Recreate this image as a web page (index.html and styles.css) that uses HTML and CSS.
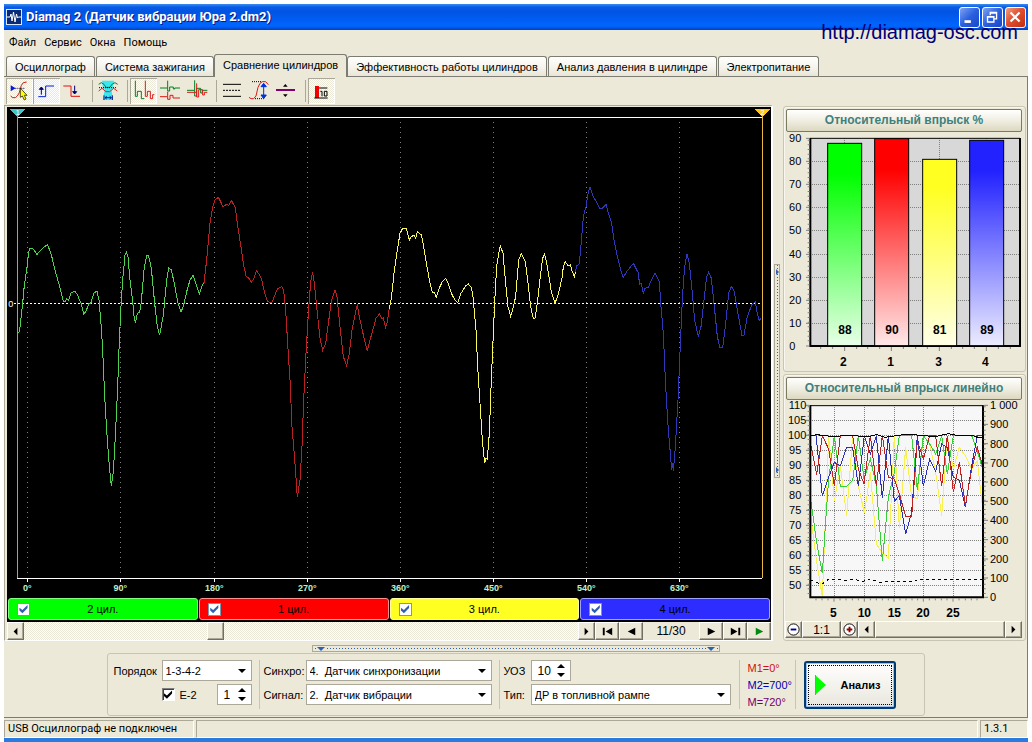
FILE: index.html
```html
<!DOCTYPE html>
<html lang="ru">
<head>
<meta charset="utf-8">
<title>Diamag 2</title>
<link rel="stylesheet" href="styles.css">
</head>
<body>
<div class="window">
  <header class="titlebar">
    <svg class="app-icon" viewBox="0 0 16 16" aria-hidden="true"><rect width="16" height="16" fill="#d8e8ff"/><rect x="1" y="1" width="14" height="14" fill="#0a2a78"/><path d="M1 8H4L5 5L6 12L7.500 3L9 13L10.500 5L11.500 9L12.500 8H15" fill="none" stroke="#fff"/></svg>
    <h1 class="title">Diamag 2 (Датчик вибрации Юра 2.dm2)</h1>
    <button class="win-btn" aria-label="Свернуть"><svg viewBox="0 0 21 21"><path d="M5 15H12" stroke="#fff" stroke-width="3"/></svg></button>
    <button class="win-btn" aria-label="Восстановить"><svg viewBox="0 0 21 21"><path d="M8 8V5H15V12H12M5 9.500H12V15.500H5ZM5 10H12M8 5.500H15" fill="none" stroke="#fff" stroke-width="1.500"/></svg></button>
    <button class="win-btn win-close" aria-label="Закрыть"><svg viewBox="0 0 21 21"><path d="M5 5L15 15M15 5L5 15" stroke="#fff" stroke-width="2.400"/></svg></button>
    <a class="site" href="http://diamag-osc.com">http://diamag-osc.com</a>
  </header>
  <nav class="menubar"><button>Файл</button><button>Сервис</button><button>Окна</button><button>Помощь</button></nav>
  <div class="tabs" role="tablist">
    <button role="tab">Осциллограф</button><button role="tab">Система зажигания</button><button role="tab" class="active" aria-selected="true">Сравнение цилиндров</button><button role="tab">Эффективность работы цилиндров</button><button role="tab">Анализ давления в цилиндре</button><button role="tab">Электропитание</button>
  </div>
  <main class="page">
    <div class="toolbar">
      <button class="tool pressed" aria-label="Курсор"><svg viewBox="18 234 81 78"><path d="M32 256L47 265L32 274Z" fill="#0018e0"/><path d="M46 265H76" stroke="#000090" stroke-width="3" stroke-dasharray="3 3"/><path d="M32 288L38 293H46L52 288L58 278L64 256L70 248L80 246" fill="none" stroke="#e01010" stroke-width="3"/><path d="M61 264V292L67 288L73 300L78 297L73 286H81Z" fill="#ff0" stroke="#000" stroke-width="2"/></svg></button>
      <button class="tool pressed" aria-label="Фронт"><svg viewBox="99 234 81 78"><path d="M115 290H137V258H162" fill="none" stroke="#0020d8" stroke-width="3"/><path d="M124 284V264M118 268L124 261L130 268Z" fill="#000070" stroke="#000070" stroke-width="3"/></svg></button>
      <button class="tool" aria-label="Спад"><svg viewBox="180 234 81 78"><path d="M190 258H213V289H240" fill="none" stroke="#e01010" stroke-width="3"/><path d="M224 257V278M218 275L224 282L230 275Z" fill="#000070" stroke="#000070" stroke-width="3"/></svg></button>
      <span class="sep"></span>
      <button class="tool" aria-label="Интервал"><svg viewBox="282 234 81 78"><path d="M303 242H339L336 266H331L336 300H306L311 266H306Z" fill="#38e8f0"/><path d="M293 253L301 248L309 253L315 262H326L334 252L342 248L350 253" fill="none" stroke="#008040" stroke-width="3"/><path d="M293 273L303 265L315 275H326L338 265L349 273" fill="none" stroke="#d02828" stroke-width="3"/><path d="M294 263H348" stroke="#000" stroke-width="3" stroke-dasharray="3 3"/><path d="M309 286V300M334 286V300M312 293H331M317 289L312 293L317 297M326 289L331 293L326 297" fill="none" stroke="#001090" stroke-width="3"/></svg></button>
      <span class="sep"></span>
      <button class="tool pressed" aria-label="Последовательно"><svg viewBox="387 234 81 78"><path d="M403 242V289H409V274H421V296H430" fill="none" stroke="#008020" stroke-width="3"/><path d="M433 242V289H439V274H448V296H455V284H460" fill="none" stroke="#e01818" stroke-width="3"/></svg></button>
      <button class="tool" aria-label="Раздельно"><svg viewBox="468 234 81 78"><path d="M477 264H500V242M500 264V273H506V261H517V267H521V264H537" fill="none" stroke="#008020" stroke-width="3"/><path d="M477 290H500V275M500 290V298H507V286H516V294H537" fill="none" stroke="#e01818" stroke-width="3"/></svg></button>
      <button class="tool" aria-label="Наложение"><svg viewBox="549 234 81 78"><path d="M558 271H581V241M581 271V288H587V265H599V279H604V271H619" fill="none" stroke="#008020" stroke-width="3"/><path d="M558 277H587V250M587 277V291H593V269H605V285H610V277H619" fill="none" stroke="#e01818" stroke-width="3"/></svg></button>
      <span class="sep"></span>
      <button class="tool" aria-label="Уровни"><svg viewBox="654 234 81 78"><path d="M666 253H720M666 289H720" stroke="#000" stroke-width="3"/><path d="M666 271H720" stroke="#000" stroke-width="3" stroke-dasharray="6 3"/></svg></button>
      <button class="tool" aria-label="Амплитуда"><svg viewBox="735 234 81 78"><path d="M753 245H780M762 296H792" stroke="#000" stroke-width="3" stroke-dasharray="3 3"/><path d="M744 292L750 296H758L765 288L771 262L777 250L784 245H794L802 254" fill="none" stroke="#e01818" stroke-width="3"/><path d="M788 254V289M780 260L788 250L796 260ZM780 285L788 296L796 285Z" fill="#0030e0" stroke="#0030e0" stroke-width="3"/></svg></button>
      <button class="tool" aria-label="Смещение"><svg viewBox="816 234 81 78"><path d="M825 270H882" stroke="#800070" stroke-width="6"/><path d="M846 260L853 252L860 260ZM846 283L853 291L860 283Z"/></svg></button>
      <span class="sep"></span>
      <button class="tool pressed" aria-label="Гистограмма"><svg viewBox="921 234 81 78"><path d="M942 258H954V294H942Z" fill="#f00000"/><path d="M954 264H979M940 294H980" stroke="#000" stroke-width="3"/><path d="M958 274H963V289M970 274H978V288H970Z" fill="none" stroke="#000" stroke-width="3"/></svg></button>
    </div>
    <div class="workspace">
      <section class="scope">
        <svg class="wave" viewBox="21 321 2292 1470" role="img" aria-label="Сигнал по цилиндрам">
          <g class="dots"><path d="M82 365V1731M361 365V1731M643 365V1731M922 365V1731M1201 365V1731M1480 365V1731M1759 365V1731M2038 365V1731"/></g>
          <path class="tick" d="M82 1737V1746M361 1737V1746M643 1737V1746M922 1737V1746M1201 1737V1746M1480 1737V1746M1759 1737V1746M2038 1737V1746"/>
          <path class="frame" d="M52 352H2286M52 1735H2286"/>
          <path class="zero" d="M42 910H2286"/>
          <path d="M52 330V1735" class="trace cyan"/><path d="M2287 330V1735" class="trace gold"/>
          <path d="M30 328H76L53 351Z" fill="#40c8c8"/><path d="M2263 328H2310L2287 351Z" fill="#ffc818"/>
          <text class="pin" x="53" y="346">1</text><text class="pin" x="2287" y="346">2</text>
          <g transform="translate(0 360)">
            <polyline class="trace green" points="56,640 60,620 68,550 73,495 80,450 86,395 90,385 98,385 111,403 121,392 131,382 143,374 155,408 167,458 177,492 190,543 197,543 200,536 206,541 213,519 225,514 231,522 243,550 251,582 257,576 266,552 273,548 282,518 291,514 297,540 304,625 308,690 314,830 320,930 328,1040 334,1098 340,1055 347,930 353,800 358,660 363,560 368,480 375,405 379,397 384,412 390,480 398,545 403,597 407,606 412,580 419,577 424,545 432,450 440,406 446,408 454,445 464,550 472,620 479,646 490,585 500,480 506,443 514,450 523,490 533,545 543,577 551,555 560,515 570,480 579,466 587,488 598,522 605,500 612,488"/>
            <polyline class="trace red" points="612,488 620,420 630,310 638,262 645,240 655,232 662,245 668,260 680,253 686,256 694,241 700,252 706,262 712,310 722,375 730,430 738,468 746,474 754,487 762,475 769,452 778,464 785,478 793,515 803,545 815,548 823,530 832,507 845,500 851,512 857,570 863,670 870,780 876,920 884,1015 892,1132 900,1080 906,980 911,840 918,700 925,580 932,485 938,457 943,490 950,560 960,655 968,690 977,670 985,610 994,545 1005,509 1011,530 1020,620 1030,710 1040,737 1048,700 1056,630 1066,580 1072,553 1078,590 1090,645 1102,693 1110,660 1118,632 1128,595 1138,582 1146,597 1150,594 1157,622 1162,605 1168,563"/>
          </g>
          <g transform="translate(1140 360)">
            <polyline class="trace yellow" points="28,567 34,535 42,460 52,390 60,340 67,327 79,325 84,345 88,360 93,350 102,346 107,355 112,335 124,345 130,375 140,435 150,490 157,516 163,518 169,532 177,506 187,485 197,476 205,490 214,520 225,540 233,548 243,520 257,497 265,492 274,502 279,530 288,630 293,740 300,850 307,960 314,1030 318,1015 322,1018 328,940 334,780 340,640 345,530 350,440 356,400 361,377 369,400 376,480 384,560 392,589 399,565 407,530 416,420 424,400 436,425 444,490 452,560 460,596 465,594 472,550 482,460 488,415 494,402 502,440 514,515 525,550 534,525 546,475 550,440 556,425 564,437 571,435 577,455 584,471 586,455"/>
            <polyline class="trace blue" points="586,455 590,438 598,432 603,375 610,290 618,260 625,215 630,202 640,230 652,250 660,266 668,264 678,253 685,280 694,305 702,360 712,410 722,450 730,472 740,455 760,430 774,457 779,492 784,490 790,522 794,505 805,502 813,482 825,460 838,485 843,560 850,640 857,800 865,930 871,1000 875,1050 878,1030 880,1052 886,980 894,840 902,650 908,520 914,440 921,402 928,430 936,510 944,600 955,650 963,620 972,540 980,470 986,457 994,475 1003,560 1012,650 1020,683 1028,682 1036,620 1046,520 1054,499 1063,515 1073,575 1086,648 1092,645 1102,590 1115,555 1126,546 1132,580 1138,602 1142,595"/>
          </g>
          <g class="angles"><text x="82" y="1773">0°</text><text x="361" y="1773">90°</text><text x="643" y="1773">180°</text><text x="922" y="1773">270°</text><text x="1201" y="1773">360°</text><text x="1480" y="1773">450°</text><text x="1759" y="1773">540°</text><text x="2038" y="1773">630°</text><text x="32" y="920" class="origin">0</text></g>
        </svg>
        <div class="cylinders">
          <label class="cyl c-green"><input type="checkbox" class="xp-check" checked><span>2 цил.</span></label>
          <label class="cyl c-red"><input type="checkbox" class="xp-check" checked><span>1 цил.</span></label>
          <label class="cyl c-yellow"><input type="checkbox" class="xp-check" checked><span>3 цил.</span></label>
          <label class="cyl c-blue"><input type="checkbox" class="xp-check" checked><span>4 цил.</span></label>
        </div>
        <div class="player">
          <button class="raised" aria-label="Влево"><svg viewBox="0 0 16 16"><path d="M10 4V12L6 8Z"/></svg></button>
          <div class="track"><span class="thumb"></span></div>
          <button class="raised" aria-label="Вправо"><svg viewBox="0 0 16 16"><path d="M6 4V12L10 8Z"/></svg></button>
          <button class="raised wide" aria-label="В начало"><svg viewBox="0 0 16 16"><path d="M3 4H5V12H3ZM13 4V12L6 8Z"/></svg></button>
          <button class="raised wide" aria-label="Назад"><svg viewBox="0 0 16 16"><path d="M12 4V12L4 8Z"/></svg></button>
          <output class="counter">11/30</output>
          <button class="raised wide" aria-label="Вперёд"><svg viewBox="0 0 16 16"><path d="M4 4V12L12 8Z"/></svg></button>
          <button class="raised wide" aria-label="В конец"><svg viewBox="0 0 16 16"><path d="M3 4V12L10 8ZM11 4H13V12H11Z"/></svg></button>
          <button class="raised wide" aria-label="Воспроизвести"><svg viewBox="0 0 16 16"><path d="M4 4V12L12 8Z" fill="#008a10"/></svg></button>
        </div>
      </section>
      <div class="v-split"><i></i><i></i></div>
      <aside class="charts">
        <section class="group">
          <h2>Относительный впрыск %</h2>
          <svg class="chart" viewBox="12 96 723 717" role="img" aria-label="Относительный впрыск">
            <defs>
              <linearGradient id="g" x2="0" y2="1"><stop stop-color="#0f0"/><stop offset=".15" stop-color="#0f0"/><stop offset="1" stop-color="#e8ffe8"/></linearGradient>
              <linearGradient id="r" x2="0" y2="1"><stop stop-color="#f00"/><stop offset=".15" stop-color="#f00"/><stop offset="1" stop-color="#ffe8e8"/></linearGradient>
              <linearGradient id="y" x2="0" y2="1"><stop stop-color="#ff2"/><stop offset=".15" stop-color="#ff2"/><stop offset="1" stop-color="#ffffe8"/></linearGradient>
              <linearGradient id="b" x2="0" y2="1"><stop stop-color="#22f"/><stop offset=".15" stop-color="#22f"/><stop offset="1" stop-color="#ececff"/></linearGradient>
            </defs>
            <rect x="90" y="115" width="630" height="623" fill="#d8d8d8"/>
            <path class="grid" d="M90 184H720M90 253H720M90 322H720M90 391H720M90 463H720M90 532H720M90 601H720M90 670H720M194 115V738M334 115V738M478 115V738M619 115V738"/>
            <path d="M90 115H720" stroke="#000" stroke-width="3"/><path d="M91 114V738M88 738H723M720 114V741" fill="none" stroke="#000" stroke-width="6"/>
            <g stroke="#000" stroke-width="3"><rect x="143" y="130" width="102" height="607" fill="url(#g)"/><rect x="284" y="116" width="102" height="621" fill="url(#r)"/><rect x="428" y="178" width="102" height="559" fill="url(#y)"/><rect x="569" y="121" width="102" height="616" fill="url(#b)"/></g>
            <path class="scale" d="M78 115H88M78 184H88M78 253H88M78 322H88M78 391H88M78 463H88M78 532H88M78 601H88M78 670H88M78 738H88M194 741V753M334 741V753M478 741V753M619 741V753M122 741V747M158 741V747M230 741V747M263 741V747M299 741V747M370 741V747M407 741V747M442 741V747M514 741V747M548 741V747M583 741V747M655 741V747M691 741V747"/>
            <path class="minor" d="M86 119V735"/>
            <g class="left"><text x="64" y="127">90</text><text x="64" y="196">80</text><text x="64" y="265">70</text><text x="64" y="334">60</text><text x="64" y="403">50</text><text x="64" y="475">40</text><text x="64" y="544">30</text><text x="64" y="613">20</text><text x="64" y="682">10</text><text x="46" y="751">0</text></g>
            <g class="strong"><text x="195" y="702">88</text><text x="336" y="702">90</text><text x="479" y="702">81</text><text x="621" y="702">89</text><text x="190" y="798">2</text><text x="332" y="798">1</text><text x="476" y="798">3</text><text x="616" y="798">4</text></g>
          </svg>
        </section>
        <section class="group">
          <h2>Относительный впрыск линейно</h2>
          <svg class="chart" viewBox="12 93 723 663" role="img" aria-label="Относительный впрыск линейно">
            <rect x="90" y="109" width="519" height="576" fill="#f7f7f7"/>
            <path class="grid" d="M90 154H609M90 199H609M90 244H609M90 289H609M90 334H609M90 379H609M90 424H609M90 469H609M90 514H609M90 559H609M90 604H609M90 649H609M162 109V685M253 109V685M342 109V685M430 109V685M519 109V685"/>
            <polyline class="line l-yellow" points="92,440 110,580 127,682 146,205 163,395 181,290 200,440 218,200 235,350 253,432 271,310 289,525 307,552 325,568 343,200 358,478 377,235 395,385 412,388 430,200 449,225 467,310 485,440 502,200 520,300 538,235 556,260 575,300 592,275 609,430"/>
            <polyline class="line l-green" points="92,392 110,520 127,613 136,470 146,330 163,200 181,352 200,352 218,335 235,200 252,330 271,270 289,350 307,577 325,385 343,310 358,200 395,200 412,362 430,200 449,225 467,255 485,200 502,315 520,200 575,200 590,240 608,300"/>
            <polyline class="line l-blue" points="92,200 108,200 127,380 146,325 163,280 181,290 200,235 218,235 235,352 253,200 271,255 289,200 307,388 325,200 343,397 358,380 377,496 395,430 412,200 430,352 449,270 467,307 485,225 502,235 520,325 538,333 556,415 575,290 592,200 609,200"/>
            <polyline class="line l-red" points="92,225 110,317 127,200 146,240 163,350 181,200 218,200 235,300 252,345 271,200 289,350 307,200 325,325 343,330 358,375 377,442 395,442 412,215 430,270 449,200 467,200 485,352 502,200 520,370 538,280 556,410 575,300 592,235 609,295"/>
            <polyline class="line" points="92,200 110,197 160,203 200,199 265,203 290,197 315,205 370,197 400,197 465,203 505,194 530,199 575,199 595,206 609,204"/>
            <polyline class="line" stroke-dasharray="9 9" points="92,633 125,646 145,631 200,634 220,631 250,637 270,630 307,642 325,636 400,637 430,630 609,631"/>
            <path d="M90 110H609" stroke="#000" stroke-width="3"/><path d="M91 109V685M88 685H612M609 109V688" fill="none" stroke="#000" stroke-width="6"/>
            <path class="scale" d="M78 109H88M78 154H88M78 199H88M78 244H88M78 289H88M78 334H88M78 379H88M78 424H88M78 469H88M78 514H88M78 559H88M78 604H88M78 649H88M612 109H624M612 166H624M612 224H624M612 282H624M612 339H624M612 397H624M612 454H624M612 512H624M612 570H624M612 627H624M612 685H624M162 688V698M253 688V698M342 688V698M430 688V698M519 688V698M108 688V694M126 688V694M144 688V694M180 688V694M198 688V694M217 688V694M235 688V694M271 688V694M289 688V694M307 688V694M325 688V694M360 688V694M378 688V694M396 688V694M413 688V694M448 688V694M466 688V694M484 688V694M501 688V694M537 688V694M556 688V694M574 688V694M591 688V694"/>
            <path class="minor" d="M86 112V682M614 112V682"/>
            <g class="left"><text x="79" y="121">110</text><text x="79" y="166">105</text><text x="79" y="211">100</text><text x="64" y="256">95</text><text x="64" y="301">90</text><text x="64" y="346">85</text><text x="64" y="391">80</text><text x="64" y="436">75</text><text x="64" y="481">70</text><text x="64" y="526">65</text><text x="64" y="571">60</text><text x="64" y="616">55</text><text x="64" y="661">50</text></g>
            <g class="right"><text x="630" y="121">1 000</text><text x="630" y="178">900</text><text x="630" y="236">800</text><text x="630" y="294">700</text><text x="630" y="351">600</text><text x="630" y="409">500</text><text x="630" y="466">400</text><text x="630" y="524">300</text><text x="630" y="582">200</text><text x="630" y="639">100</text><text x="630" y="697">0</text></g>
            <g class="strong"><text x="160" y="743">5</text><text x="253" y="743">10</text><text x="343" y="743">15</text><text x="429" y="743">20</text><text x="519" y="743">25</text></g>
          </svg>
          <div class="zoombar">
            <button class="raised" aria-label="Уменьшить"><svg viewBox="0 0 16 16"><circle cx="8" cy="8" r="6" fill="#fff" stroke="#000"/><path d="M5 8H11" stroke="#000090" stroke-width="2"/></svg></button>
            <button class="raised ratio">1:1</button>
            <button class="raised" aria-label="Увеличить"><svg viewBox="0 0 16 16"><circle cx="8" cy="8" r="6" fill="#fff" stroke="#000"/><path d="M5 8H11M8 5V11" stroke="#900000" stroke-width="2"/></svg></button>
            <button class="raised" aria-label="Влево"><svg viewBox="0 0 16 16"><path d="M10 4V12L6 8Z"/></svg></button>
            <span class="raised bar"></span>
            <button class="raised" aria-label="Вправо"><svg viewBox="0 0 16 16"><path d="M6 4V12L10 8Z"/></svg></button>
          </div>
        </section>
      </aside>
    </div>
    <div class="h-split"><i></i><i></i></div>
    <form class="settings">
      <div class="set order">
        <label for="order">Порядок</label><span class="drop"><select id="order"><option>1-3-4-2</option></select></span>
        <span></span><span class="pair"><label class="e2"><input type="checkbox" class="classic-check" checked>E-2</label><span class="spin"><input value="1" aria-label="Номер"><i></i><i></i></span></span>
      </div>
      <div class="set signals">
        <label for="sync">Синхро:</label><span class="drop"><select id="sync"><option>4.&nbsp; Датчик синхронизации</option></select></span>
        <label for="signal">Сигнал:</label><span class="drop"><select id="signal"><option>2.&nbsp; Датчик вибрации</option></select></span>
      </div>
      <div class="set kind">
        <label for="uoz">УОЗ</label><span class="spin"><input id="uoz" value="10"><i></i><i></i></span>
        <label for="kind">Тип:</label><span class="drop"><select id="kind"><option>ДР в топливной рампе</option></select></span>
      </div>
      <div class="marks"><span class="m1">M1=0°</span><span class="m2">M2=700°</span><span class="m3">M=720°</span></div>
      <div class="action"><button type="button" class="analyze"><svg viewBox="0 0 11 20"><path d="M0 0L11 10L0 20Z" fill="#0f0"/><path d="M.5 0V20" stroke="#6a6"/></svg><span>Анализ</span></button></div>
    </form>
  </main>
  <footer class="status"><span class="device">USB Осциллограф не подключен</span><span class="fill"></span><span class="version">1.3.1</span></footer>
</div>
</body>
</html>
```

FILE: styles.css
```css
* { box-sizing: border-box; }
body { margin: 0; padding: 4px 4px 0; background: #fff; font: 11px "Liberation Sans", sans-serif; color: #000; }
button, input, select { font: inherit; color: inherit; margin: 0; padding: 0; border: 0; background: none; border-radius: 0; }
svg { display: block; }
.window { display: flex; flex-direction: column; min-height: calc(100vh - 4px); background: #ece9d8; border-bottom: 4px solid #2a7be0; }

.titlebar { position: relative; display: flex; align-items: center; gap: 2px; height: 26px; padding: 0 2px; background: linear-gradient(#3a8cf0, #0a5ce6 12%, #0054e3 30%, #005cf0 55%, #0066ff 85%, #0040c0); }
.app-icon { width: 16px; height: 16px; }
.title { flex: 1; margin: 0 0 0 2px; font: bold 13px/26px Roboto, sans-serif; color: #fff; text-shadow: 1px 1px #0a1883; white-space: nowrap; }
.win-btn { width: 21px; height: 21px; border: 1px solid #fff; border-radius: 3px; background: linear-gradient(135deg, #7fa4f0, #2a5fe0 50%, #1a48c8); }
.win-btn svg { width: 19px; height: 19px; }
.win-close { background: linear-gradient(135deg, #f0a080, #e05030 45%, #c03010); }
.site { position: absolute; right: 10px; top: 17px; font-size: 20px; line-height: 22px; color: #00007a; text-decoration: none; }

.menubar { display: flex; gap: 8px; height: 24px; padding: 0 5px; font-family: Roboto, sans-serif; }
.tabs { display: flex; align-items: flex-end; height: 23px; padding-left: 2px; border-bottom: 1px solid #7d7c72; }
.tabs button { height: 20px; padding: 0 8px; margin-right: 1px; border: 1px solid #7d7c72; border-bottom: 0; border-radius: 3px 3px 0 0; background: linear-gradient(#fff, #f4f2ea 60%, #e8e5d6); white-space: nowrap; }
.tabs .active { height: 23px; margin: 0 0 -1px -1px; padding-bottom: 2px; background: #ece9d8; }

.page { flex: 1; display: flex; flex-direction: column; border-right: 1px solid #7d7c72; border-bottom: 1px solid #7d7c72; }
.toolbar { display: flex; height: 28px; padding: 1px 2px; }
.tool { width: 27px; height: 26px; }
.tool svg { width: 27px; height: 26px; }
.tool.pressed { background: repeating-conic-gradient(#fff 0 25%, #ece9d8 0 50%) 0 0 / 2px 2px; box-shadow: inset 1px 1px #aca899, inset -1px -1px #fff; }
.sep { width: 3px; margin: 2px 0 2px 5px; border-left: 1px solid #aca899; }

.workspace { display: flex; gap: 1px; padding-right: 1px; }
.scope { flex: 1; min-width: 0; padding: 1px 0 0 2px; border: 1px solid; border-color: #aca899 #fff #fff #aca899; border-right-width: 2px; }
.wave { width: 100%; background: #000; shape-rendering: crispEdges; }
.dots path { stroke: #808080; stroke-width: 3; stroke-dasharray: 3 12; }
.tick, .frame, .zero { fill: none; stroke: #fff; stroke-width: 3; }
.zero { stroke-dasharray: 6 6; }
.trace { fill: none; stroke-width: 3; }
.cyan { stroke: #60b8b8; } .gold { stroke: #e8b840; }
.green { stroke: #4fd04f; } .red { stroke: #b82222; } .yellow { stroke: #f8f858; } .blue { stroke: #3038b8; }
.angles { font-size: 27px; font-weight: bold; fill: #c0f0c8; text-anchor: middle; }
.angles .origin { fill: #fff; font-weight: normal; }
.pin { font-size: 21px; fill: #fff; text-anchor: middle; }
.cylinders { display: grid; grid-template-columns: repeat(4, 1fr); gap: 1px; padding: 1px 1px 2px; background: #000; }
.cyl { display: flex; align-items: center; height: 22px; padding: 0 8px; border: 1px solid; border-radius: 3px; }
.cyl span { flex: 1; text-align: center; padding-right: 13px; }
.c-green { background: #0f0; border-color: #80ff80; } .c-red { background: #f00; border-color: #ff9090; }
.c-yellow { background: #ff2; border-color: #ffffa0; } .c-blue { background: #2d2dff; border-color: #a0a0ff; }
.xp-check, .classic-check { appearance: none; display: grid; place-items: center; width: 13px; height: 13px; background: #fff; border: 1px solid #7a98b0; }
.xp-check::after, .classic-check::after { content: ""; width: 9px; height: 9px; background: #3060b0; clip-path: polygon(5% 35%, 38% 62%, 95% 5%, 95% 40%, 38% 98%, 5% 68%); }
.classic-check { border: 1px solid; border-color: #808080 #fff #fff #808080; box-shadow: inset 1px 1px #404040; }
.classic-check::after { background: #000; }
.player { display: flex; height: 18px; }
.raised { display: grid; place-items: center; width: 17px; background: #ece9d8; border: 1px solid; border-color: #fff #716f64 #716f64 #fff; box-shadow: inset -1px -1px #aca899; }
.raised svg { width: 15px; height: 15px; }
.wide { width: 24px; }
.track { flex: 1; background: repeating-conic-gradient(#fff 0 25%, #ece9d8 0 50%) 0 0 / 2px 2px; }
.thumb { display: block; margin-left: 33%; width: 17px; height: 18px; background: #ece9d8; border: 1px solid; border-color: #fff #716f64 #716f64 #fff; box-shadow: inset -1px -1px #aca899; }
.counter { width: 56px; text-align: center; font-size: 12px; line-height: 18px; }

.v-split { align-self: center; width: 6px; height: 214px; display: flex; flex-direction: column; justify-content: space-between; padding: 4px 1px; border: 1px solid #aca899; margin: -4px 2px 0 0; background: linear-gradient(#3060b0 33%, transparent 0) 2px 12px / 1px 3px repeat-y; }
.v-split i { width: 0; border: 3px solid transparent; border-left-color: #3060b0; border-right: 0; }
.charts { flex: 0 0 243px; display: flex; flex-direction: column; gap: 2px; padding: 1px 0 0; }
.group { border: 1px solid #c8c5b2; border-radius: 3px; box-shadow: inset 1px 1px #f8f6ee; }
.group h2 { margin: 2px 3px 0 2px; height: 23px; border: 1px solid #7a7a60; border-radius: 2px; background: linear-gradient(#fff, #f0eee2 50%, #dcd8c0); font: bold 12px/21px "Liberation Sans", sans-serif; color: #40807c; text-align: center; white-space: nowrap; }
.chart { width: 100%; }
.chart text { font-size: 33px; }
.chart .left { text-anchor: end; }
.chart .strong text { font-size: 36px; font-weight: bold; text-anchor: middle; }
.grid { stroke: #808080; stroke-width: 3; stroke-dasharray: 3 3; shape-rendering: crispEdges; }
.scale { stroke: #808080; stroke-width: 3; }
.minor { stroke: #808080; stroke-width: 6; stroke-dasharray: 3 11; }
.line { fill: none; stroke: #000; stroke-width: 3; shape-rendering: crispEdges; }
.l-yellow { stroke: #f8f050; } .l-green { stroke: #38d038; } .l-red { stroke: #c02020; } .l-blue { stroke: #2830b8; }
.zoombar { display: flex; height: 17px; margin: 0 3px 2px 1px; }
.ratio { width: 39px; font-size: 12px; }
.zoombar .bar { flex: 1; }

.h-split { align-self: center; display: flex; justify-content: space-between; width: 408px; height: 7px; margin-top: 4px; padding: 1px 4px; border: 1px solid #aca899; background: linear-gradient(90deg, #3060b0 33%, transparent 0) 14px 2px / 3px 1px repeat-x; }
.h-split i { height: 0; border: 4px solid transparent; border-top-color: #3060b0; border-bottom: 0; background: #ece9d8; }
.settings { align-self: center; display: flex; align-items: center; height: 63px; margin-top: 1px; padding-right: 28px; border: 1px solid #c8c5b2; border-radius: 3px; }
.set { display: grid; align-items: center; grid-auto-rows: 21px; gap: 3px 0; padding: 0 7px 0 4px; height: 49px; border-right: 1px solid #c8c5b2; }
.order { grid-template-columns: 48px 90px; padding-left: 6px; }
.signals { grid-template-columns: 42px 186px; }
.kind { grid-template-columns: 27px 200px; padding-right: 8px; }
.pair { display: flex; justify-content: space-between; align-items: center; }
.e2 { display: flex; align-items: center; gap: 5px; }
.drop { position: relative; display: block; }
.drop select { appearance: none; width: 100%; height: 21px; padding: 0 20px 0 3px; border: 1px solid #aca899; background: #fff; }
.drop::after { content: ""; position: absolute; right: 6px; top: 9px; border: 4px solid transparent; border-top-color: #000; border-bottom: 0; pointer-events: none; }
.spin { position: relative; display: block; width: 35px; height: 21px; }
.spin input { width: 100%; height: 21px; padding: 0 6px; border: 1px solid #aca899; background: #fff; font-size: 12px; }
.kind .spin { width: 40px; }
.spin i { position: absolute; right: 6px; border: 4px solid transparent; }
.spin i:first-of-type { top: 4px; border-bottom-color: #000; border-top: 0; }
.spin i:last-of-type { bottom: 4px; border-top-color: #000; border-bottom: 0; }
.marks { display: flex; flex-direction: column; justify-content: space-between; width: 56px; height: 49px; padding-left: 8px; line-height: 17px; border-right: 1px solid #c8c5b2; }
.m1 { color: #d01010; } .m2 { color: #0000b0; } .m3 { color: #700070; }
.action { padding-left: 8px; }
.analyze { display: flex; align-items: center; gap: 15px; width: 92px; height: 48px; padding: 0 9px; border: 2px solid #003c74; border-radius: 3px; background: linear-gradient(#fff, #e8e6dc); box-shadow: inset 0 0 0 1px #a0c0f0; outline: 1px dotted #000; outline-offset: -5px; font-weight: bold; }
.analyze svg { width: 11px; height: 20px; }
.status { display: flex; gap: 2px; margin-top: 2px; height: 18px; font: 11px/15px Roboto, sans-serif; white-space: nowrap; }
.status span { border: 1px solid; border-color: #aca899 #fff #fff #aca899; padding: 0 3px; }
.device { width: 190px; }
.status .fill { flex: 1; }
.version { width: 48px; }
```
